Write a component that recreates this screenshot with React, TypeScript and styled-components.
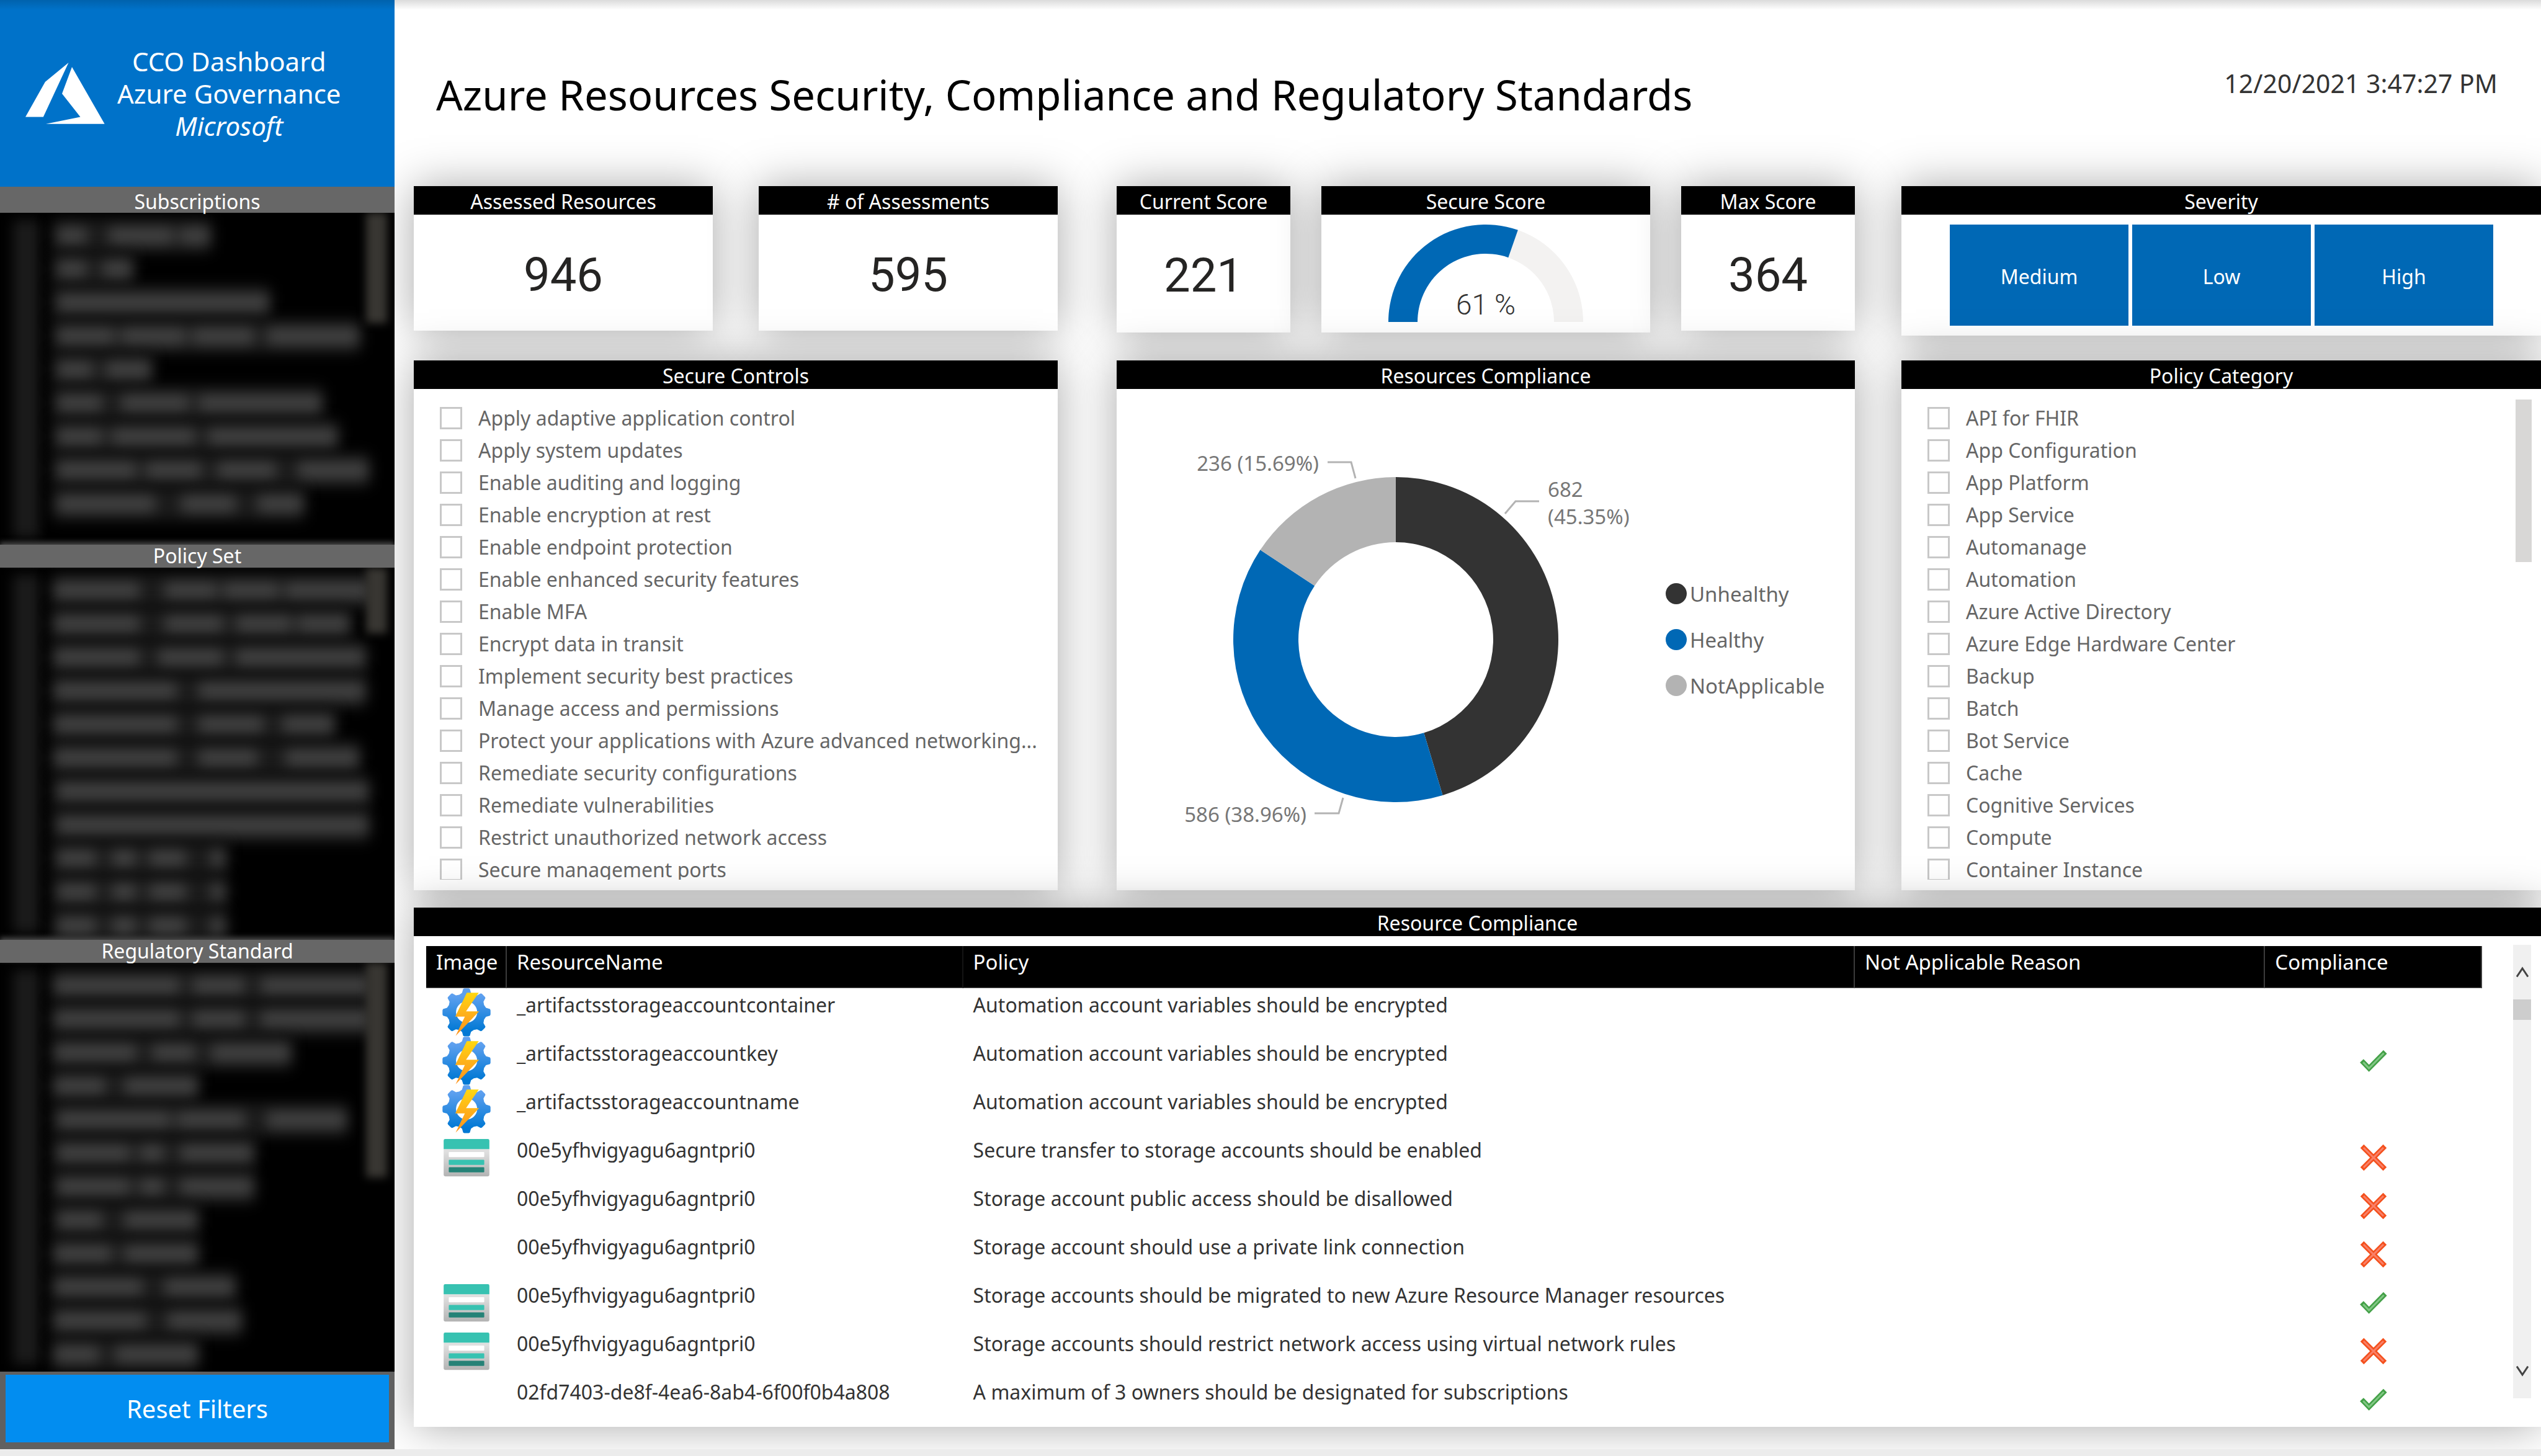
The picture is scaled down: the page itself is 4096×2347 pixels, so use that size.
import React from 'react';
import styled, { createGlobalStyle } from 'styled-components';

const UI = '"Noto Sans", "Open Sans", sans-serif';
const NUM = 'Roboto, "Noto Sans", sans-serif';
const BLUE = '#0068b5';

const Global = createGlobalStyle`
  *, *::before, *::after { box-sizing: border-box; }
  html, body { margin: 0; padding: 0; background: #fff; }
  body { font-family: ${UI}; font-size: 32px; color: #333; }
  button { font-family: inherit; border: 0; cursor: pointer; }
`;

const Page = styled.div`
  position: relative;
  display: flex;
  flex-direction: column;
  min-height: 100vh;
  overflow: hidden;
  &::before {
    content: '';
    position: absolute;
    inset: 0 0 auto 0;
    height: 16px;
    z-index: 2;
    background: linear-gradient(rgba(0, 0, 0, 0.14), rgba(0, 0, 0, 0));
  }
`;

const Columns = styled.div`
  display: flex;
  flex: 1;
`;

const BottomStrip = styled.div`
  position: relative;
  height: 11px;
  background: #ececec;
`;

/* ---------- sidebar ---------- */

const Sidebar = styled.aside`
  position: relative;
  z-index: 1;
  flex: 0 0 636px;
  min-width: 0;
  display: flex;
  flex-direction: column;
  overflow: hidden;
  background: #000;
`;

const Brand = styled.div`
  height: 301px;
  display: flex;
  align-items: center;
  gap: 20px;
  padding-left: 41px;
  background: #0072c9;
`;

const BrandText = styled.div`
  text-align: center;
  color: #fff;
  font-size: 42px;
  line-height: 52px;
`;

const SideTitle = styled.h2<{ $tall?: boolean }>`
  position: relative;
  margin: 0;
  height: ${(p) => (p.$tall ? 42 : 37)}px;
  line-height: ${(p) => (p.$tall ? 48 : 36)}px;
  background: #676767;
  box-shadow: ${(p) => (p.$tall ? 'none' : '0 -4px 8px #4a4a4a')};
  color: #fff;
  font-size: 32px;
  font-weight: 400;
  text-align: center;
`;

const HiddenList = styled.div<{ $grow: number }>`
  flex: ${(p) => p.$grow} 0 0;
  min-height: 0;
  display: flex;
  overflow: hidden;
  background: #000;
`;

const BoxStrip = styled.div`
  flex: 0 0 42px;
  margin: 12px 22px 12px 21px;
  background: #1b1b1b;
  filter: blur(10px);
`;

const HiddenRows = styled.div`
  flex: 1;
  min-width: 0;
  padding-top: 10px;
`;

const HiddenRow = styled.div`
  width: max-content;
  height: 54px;
  display: flex;
  align-items: center;
  background: #1a1a1a;
  filter: blur(11px);
`;

const Smudge = styled.span<{ $gap: number; $w: number }>`
  flex: 0 0 ${(p) => p.$w}px;
  height: 28px;
  margin-left: ${(p) => p.$gap}px;
  background: #424242;
`;

const HiddenThumb = styled.div<{ $h: number }>`
  flex: 0 0 34px;
  height: ${(p) => p.$h}px;
  margin-right: 12px;
  background: #383632;
  filter: blur(7px);
`;

const ResetArea = styled.div`
  padding: 5px 9px 11px;
  background: #606060;
`;

const ResetButton = styled.button`
  display: block;
  width: 100%;
  height: 109px;
  background: #028df0;
  color: #fff;
  font-size: 40px;
`;

/* ---------- main area ---------- */

const Main = styled.main`
  flex: 1;
  min-width: 0;
  padding-left: 31px;
  display: flex;
  flex-direction: column;
`;

const TopBar = styled.header`
  height: 300px;
  display: flex;
  align-items: center;
  justify-content: space-between;
  padding: 4px 70px 0 36px;
`;

const PageTitle = styled.h1`
  margin: 0;
  font-size: 67px;
  font-weight: 400;
  color: #000;
`;

const Stamp = styled.time`
  padding-bottom: 36px;
  font-size: 41px;
  color: #333;
`;

const Row = styled.div<{ $h: number; $mb: number }>`
  display: flex;
  height: ${(p) => p.$h}px;
  margin-bottom: ${(p) => p.$mb}px;
`;

const Group = styled.div<{ $w: number; $ml?: number; $gap?: number }>`
  flex: ${(p) => p.$w} 1 0;
  min-width: 0;
  display: flex;
  gap: ${(p) => p.$gap ?? 0}px;
  margin-left: ${(p) => p.$ml ?? 0}px;
`;

const Card = styled.section<{ $w?: number; $h: string }>`
  flex: ${(p) => p.$w ?? 1} 1 0;
  min-width: 0;
  height: ${(p) => p.$h};
  display: flex;
  flex-direction: column;
  background: #fff;
  box-shadow: 0 0 68px rgba(0, 0, 0, 0.34);
`;

const CardTitle = styled.h2`
  margin: 0;
  flex: 0 0 46px;
  height: 46px;
  line-height: 50px;
  background: #000;
  color: #fff;
  font-size: 32px;
  font-weight: 400;
  text-align: center;
`;

const Value = styled.div`
  flex: 1;
  display: flex;
  align-items: center;
  justify-content: center;
  padding-top: 6px;
  font-family: ${NUM};
  font-size: 76px;
  color: #252423;
`;

const GaugeBody = styled.div`
  flex: 1;
  padding-top: 16px;
  text-align: center;
  svg { display: inline-block; vertical-align: top; }
`;

const Tiles = styled.div`
  flex: 1;
  display: flex;
  gap: 6px;
  padding: 16px 77px 16px 78px;
`;

const Tile = styled.button`
  flex: 1;
  padding: 4px 0 0;
  background: ${BLUE};
  color: #fff;
  font-size: 32px;
`;

const ListBody = styled.div`
  flex: 1;
  min-height: 0;
  display: flex;
  padding: 21px 15px 17px 42px;
`;

const CheckList = styled.ul`
  flex: 1;
  min-width: 0;
  margin: 0;
  padding: 0;
  list-style: none;
  overflow: hidden;
`;

const CheckItem = styled.label`
  display: flex;
  align-items: center;
  height: 52px;
  gap: 26px;
  font-size: 32px;
  line-height: 52px;
  color: #666;
  white-space: nowrap;
`;

const Tick = styled.input`
  appearance: none;
  flex: none;
  width: 36px;
  height: 36px;
  margin: 0;
  border: 3px solid #c8c8c8;
  background: #fff;
`;

const ListThumb = styled.div`
  flex: none;
  width: 26px;
  height: 262px;
  margin-top: -4px;
  background: #d8d7d6;
`;

const ChartBody = styled.div`
  flex: 1;
  min-height: 0;
  display: flex;
  align-items: center;
  svg { flex: none; }
`;

const Legend = styled.ul`
  margin: 0;
  padding: 0;
  list-style: none;
`;

const LegendItem = styled.li`
  display: flex;
  align-items: center;
  gap: 5px;
  height: 74px;
  font-size: 33px;
  color: #666;
`;

const Dot = styled.span<{ $c: string }>`
  width: 34px;
  height: 34px;
  border-radius: 50%;
  background: ${(p) => p.$c};
`;

/* ---------- table ---------- */

const TableBody = styled.div`
  flex: 1;
  min-height: 0;
  display: flex;
  align-items: flex-start;
  gap: 50px;
  padding: 14px 16px 0 20px;
`;

const DataTable = styled.table`
  flex: 1;
  min-width: 0;
  margin-top: 2px;
  table-layout: fixed;
  border-collapse: separate;
  border-spacing: 0;
  font-size: 32px;
`;

const Th = styled.th<{ $w: number; $faint?: boolean }>`
  width: ${(p) => p.$w}%;
  height: 68px;
  padding: 3px 0 0 16px;
  background: #000;
  border-right: 2px solid ${(p) => (p.$faint ? '#141414' : '#3c3c3c')};
  border-bottom: 1px solid #777;
  color: #fff;
  font-size: 33px;
  font-weight: 400;
  line-height: 46px;
  text-align: left;
  vertical-align: top;
  white-space: nowrap;
`;

const Td = styled.td`
  height: 78px;
  padding: 4px 0 0 16px;
  color: #333;
  line-height: 46px;
  vertical-align: top;
  white-space: nowrap;
`;

const IconTd = styled.td`
  height: 78px;
  padding: 0;
  line-height: 0;
  text-align: center;
  vertical-align: middle;
`;

const Scroller = styled.div`
  flex: none;
  width: 29px;
  height: 731px;
  display: flex;
  flex-direction: column;
  background: #f0f0f0;
`;

const ScrollButton = styled.button`
  height: 88px;
  padding: 0;
  background: transparent;
  line-height: 0;
`;

const ScrollTrack = styled.div`
  flex: 1;
`;

const ScrollThumb = styled.div`
  height: 33px;
  background: #cdcdcd;
`;

/* ---------- data ---------- */

type Seg = [number, number];

const subscriptions: Seg[][] = [
  [[91, 140], [175, 280], [290, 340]],
  [[91, 140], [165, 215]],
  [[91, 435]],
  [[91, 185], [195, 300], [310, 410], [430, 580]],
  [[91, 150], [170, 245]],
  [[91, 165], [195, 305], [320, 520]],
  [[91, 165], [180, 315], [335, 545]],
  [[91, 220], [235, 325], [350, 445], [480, 595]],
  [[91, 250], [292, 380], [415, 490]],
];

const policySets: Seg[][] = [
  [[85, 225], [265, 350], [360, 450], [460, 600]],
  [[85, 225], [265, 360], [380, 470], [480, 565]],
  [[85, 225], [255, 360], [380, 590]],
  [[85, 285], [320, 590]],
  [[85, 285], [320, 425], [455, 540]],
  [[85, 285], [320, 415], [460, 580]],
  [[91, 595]],
  [[91, 595]],
  [[91, 155], [180, 220], [240, 300], [340, 365]],
  [[91, 155], [180, 220], [240, 300], [340, 365]],
  [[91, 155], [180, 220], [240, 300], [340, 365]],
];

const standards: Seg[][] = [
  [[85, 290], [310, 395], [420, 600]],
  [[85, 290], [310, 395], [420, 600]],
  [[85, 220], [245, 315], [340, 470]],
  [[85, 170], [200, 320]],
  [[91, 275], [285, 395], [430, 560]],
  [[91, 210], [225, 265], [290, 410]],
  [[91, 210], [225, 265], [290, 410]],
  [[91, 165], [200, 320]],
  [[85, 180], [200, 320]],
  [[85, 230], [265, 380]],
  [[85, 235], [270, 390]],
  [[85, 160], [185, 320]],
];

const controls = [
  'Apply adaptive application control',
  'Apply system updates',
  'Enable auditing and logging',
  'Enable encryption at rest',
  'Enable endpoint protection',
  'Enable enhanced security features',
  'Enable MFA',
  'Encrypt data in transit',
  'Implement security best practices',
  'Manage access and permissions',
  'Protect your applications with Azure advanced networking...',
  'Remediate security configurations',
  'Remediate vulnerabilities',
  'Restrict unauthorized network access',
  'Secure management ports',
];

const categories = [
  'API for FHIR',
  'App Configuration',
  'App Platform',
  'App Service',
  'Automanage',
  'Automation',
  'Azure Active Directory',
  'Azure Edge Hardware Center',
  'Backup',
  'Batch',
  'Bot Service',
  'Cache',
  'Cognitive Services',
  'Compute',
  'Container Instance',
];

type Kind = 'gear' | 'storage' | '';
type State = 'ok' | 'bad' | '';

const resources: [Kind, string, string, State][] = [
  ['gear', '_artifactsstorageaccountcontainer', 'Automation account variables should be encrypted', ''],
  ['gear', '_artifactsstorageaccountkey', 'Automation account variables should be encrypted', 'ok'],
  ['gear', '_artifactsstorageaccountname', 'Automation account variables should be encrypted', ''],
  ['storage', '00e5yfhvigyagu6agntpri0', 'Secure transfer to storage accounts should be enabled', 'bad'],
  ['', '00e5yfhvigyagu6agntpri0', 'Storage account public access should be disallowed', 'bad'],
  ['', '00e5yfhvigyagu6agntpri0', 'Storage account should use a private link connection', 'bad'],
  ['storage', '00e5yfhvigyagu6agntpri0', 'Storage accounts should be migrated to new Azure Resource Manager resources', 'ok'],
  ['storage', '00e5yfhvigyagu6agntpri0', 'Storage accounts should restrict network access using virtual network rules', 'bad'],
  ['', '02fd7403-de8f-4ea6-8ab4-6f00f0b4a808', 'A maximum of 3 owners should be designated for subscriptions', 'ok'],
];

/* ---------- drawings ---------- */

const AzureLogo = () => (
  <svg width="128" height="99" viewBox="41 98 128 99" fill="#fff" aria-hidden="true">
    <path d="M110.5 98 72.8 129 41 185.6H69.8Z" />
    <path d="M116 105 100 148 129.5 185.6 74 196.8H168.6Z" />
  </svg>
);

const polar = (cx: number, cy: number, r: number, deg: number) => {
  const a = ((deg - 90) * Math.PI) / 180;
  return `${(cx + r * Math.cos(a)).toFixed(2)} ${(cy + r * Math.sin(a)).toFixed(2)}`;
};

const ring = (cx: number, cy: number, R: number, r: number, from: number, to: number) => {
  const big = to - from > 180 ? 1 : 0;
  return `M${polar(cx, cy, R, from)}A${R} ${R} 0 ${big} 1 ${polar(cx, cy, R, to)}L${polar(cx, cy, r, to)}A${r} ${r} 0 ${big} 0 ${polar(cx, cy, r, from)}Z`;
};

const gearOutline = Array.from({ length: 8 }, (_, i) => {
  const c = i * 45;
  return [
    [97, -22.5], [102, -13], [121, -8], [123, -5], [123, 5], [121, 8], [102, 13],
  ].map(([r, d]) => polar(159.5, 150, r, c + d)).join('L');
}).join('L');

const GearIcon = () => (
  <svg width="78" height="78" viewBox="36 27 247 247" aria-hidden="true">
    <defs>
      <linearGradient id="gearFill" x1="0" y1="0" x2="0" y2="1">
        <stop offset="0.15" stopColor="#5ea0ef" />
        <stop offset="0.9" stopColor="#0078d4" />
      </linearGradient>
      <linearGradient id="boltFill" x1="0" y1="0" x2="0" y2="1">
        <stop offset="0" stopColor="#ffd70f" />
        <stop offset="0.5" stopColor="#feb01b" />
        <stop offset="1" stopColor="#fe921b" />
      </linearGradient>
    </defs>
    <path d={`M${gearOutline}Z`} fill="url(#gearFill)" />
    <circle cx="160" cy="149" r="54" fill="#fff" />
    <path d="M161 50H222L157 145H224L104 270L151 172H102Z" fill="url(#boltFill)" />
  </svg>
);

const StorageIcon = () => (
  <svg width="78" height="78" viewBox="0 0 18 18" aria-hidden="true">
    <defs>
      <linearGradient id="storageFill" x1="0" y1="1" x2="0" y2="0">
        <stop offset="0" stopColor="#b3b3b3" />
        <stop offset="0.9" stopColor="#dfdfdf" />
      </linearGradient>
    </defs>
    <path d="M.5 5.8h17v9.6a.57.57 0 0 1-.57.57H1.07a.57.57 0 0 1-.57-.57Z" fill="url(#storageFill)" />
    <path d="M1.07 2.1h15.86a.57.57 0 0 1 .57.57V5.8H.5V2.67a.57.57 0 0 1 .57-.57Z" fill="#37c2b1" />
    <rect x="2.4" y="6.9" width="13.2" height="1.9" rx=".28" fill="#fff" />
    <rect x="2.4" y="9.8" width="13.2" height="1.9" rx=".28" fill="#37c2b1" />
    <rect x="2.4" y="12.6" width="13.2" height="1.9" rx=".28" fill="#258277" />
  </svg>
);

const OkIcon = () => (
  <svg width="48" height="48" viewBox="-24 -24 48 48" fill="none" role="img" aria-label="Compliant">
    <path d="M-19 0 -7.3 12 18.8-14.4" stroke="#43a047" strokeWidth="8" />
    <path d="M-16.6 2.4 -7.3 12 16.6-12.2" stroke="#81c784" strokeWidth="3" />
  </svg>
);

const BadIcon = () => (
  <svg width="48" height="48" viewBox="-24 -24 48 48" fill="none" role="img" aria-label="Not compliant">
    <path d="M-18.4-18.4 18.4 18.4M18.4-18.4-18.4 18.4" stroke="#f4511e" strokeWidth="8" />
    <path d="M-16-16 16 16M16-16-16 16" stroke="#fa8068" strokeWidth="3" />
  </svg>
);

const Gauge = () => {
  const end = -90 + 180 * (221 / 364);
  return (
    <svg width="314" height="157" viewBox="0 0 314 157" role="img" aria-label="Secure score">
      <path d={ring(157, 157, 157, 110, end, 90)} fill="#f3f2f1" />
      <path d={ring(157, 157, 157, 110, -90, end)} fill={BLUE} />
      <text x="157" y="145" textAnchor="middle" fontFamily={NUM} fontWeight="300" fontSize="46" fill="#333">61 %</text>
    </svg>
  );
};

const parts = [
  { name: 'Unhealthy', count: 682, color: '#333333' },
  { name: 'Healthy', count: 586, color: BLUE },
  { name: 'NotApplicable', count: 236, color: '#b3b3b3' },
];

const Donut = () => {
  const total = parts.reduce((s, p) => s + p.count, 0);
  let at = 0;
  return (
    <svg width="885" height="808" viewBox="0 0 885 808" fontFamily={UI} fontSize="33" fill="#777">
      {parts.map((p) => {
        const from = at;
        at += (p.count / total) * 360;
        return <path key={p.name} d={ring(450, 404, 262, 157, from, at)} fill={p.color} />;
      })}
      <g fill="none" stroke="#b3b3b3" strokeWidth="3">
        <path d="M340 118H378L385 144" />
        <path d="M681 181H643L626 201" />
        <path d="M319 684H358L365 659" />
      </g>
      <text x="326" y="132" textAnchor="end">236 (15.69%)</text>
      <text x="695" y="174">682</text>
      <text x="695" y="218">(45.35%)</text>
      <text x="306" y="698" textAnchor="end">586 (38.96%)</text>
    </svg>
  );
};

/* ---------- composed parts ---------- */

const Redacted = ({ rows, grow, thumb }: { rows: Seg[][]; grow: number; thumb: number }) => (
  <HiddenList $grow={grow} aria-hidden="true">
    <BoxStrip />
    <HiddenRows>
      {rows.map((segs, i) => (
        <HiddenRow key={i}>
          {segs.map(([a, b], j) => (
            <Smudge key={j} $gap={a - (j ? segs[j - 1][1] : 85)} $w={b - a} />
          ))}
        </HiddenRow>
      ))}
    </HiddenRows>
    <HiddenThumb $h={thumb} />
  </HiddenList>
);

const Checks = ({ items, scroll }: { items: string[]; scroll?: boolean }) => (
  <ListBody>
    <CheckList>
      {items.map((t) => (
        <li key={t}>
          <CheckItem>
            <Tick type="checkbox" />
            {t}
          </CheckItem>
        </li>
      ))}
    </CheckList>
    {scroll && <ListThumb />}
  </ListBody>
);

export default function App() {
  return (
    <Page>
      <Global />
      <Columns>
        <Sidebar>
          <Brand>
            <AzureLogo />
            <BrandText>
              CCO Dashboard
              <br />
              Azure Governance
              <br />
              <em>Microsoft</em>
            </BrandText>
          </Brand>
          <SideTitle $tall>Subscriptions</SideTitle>
          <Redacted rows={subscriptions} grow={535} thumb={178} />
          <SideTitle>Policy Set</SideTitle>
          <Redacted rows={policySets} grow={600} thumb={106} />
          <SideTitle>Regulatory Standard</SideTitle>
          <Redacted rows={standards} grow={659} thumb={346} />
          <ResetArea>
            <ResetButton type="button">Reset Filters</ResetButton>
          </ResetArea>
        </Sidebar>

        <Main>
          <TopBar>
            <PageTitle>Azure Resources Security, Compliance and Regulatory Standards</PageTitle>
            <Stamp>12/20/2021 3:47:27 PM</Stamp>
          </TopBar>

          <Row $h={241} $mb={40}>
            <Group $w={1038} $gap={74}>
              <Card $h="233px">
                <CardTitle>Assessed Resources</CardTitle>
                <Value>946</Value>
              </Card>
              <Card $h="233px">
                <CardTitle># of Assessments</CardTitle>
                <Value>595</Value>
              </Card>
            </Group>
            <Group $w={1190} $ml={95} $gap={50}>
              <Card $w={280} $h="236px">
                <CardTitle>Current Score</CardTitle>
                <Value>221</Value>
              </Card>
              <Card $w={530} $h="236px">
                <CardTitle>Secure Score</CardTitle>
                <GaugeBody>
                  <Gauge />
                </GaugeBody>
              </Card>
              <Card $w={280} $h="233px">
                <CardTitle>Max Score</CardTitle>
                <Value>364</Value>
              </Card>
            </Group>
            <Group $w={1031} $ml={75}>
              <Card $h="241px">
                <CardTitle>Severity</CardTitle>
                <Tiles>
                  <Tile type="button">Medium</Tile>
                  <Tile type="button">Low</Tile>
                  <Tile type="button">High</Tile>
                </Tiles>
              </Card>
            </Group>
          </Row>

          <Row $h={854} $mb={28}>
            <Group $w={1038}>
              <Card $h="100%">
                <CardTitle>Secure Controls</CardTitle>
                <Checks items={controls} />
              </Card>
            </Group>
            <Group $w={1190} $ml={95}>
              <Card $h="100%">
                <CardTitle>Resources Compliance</CardTitle>
                <ChartBody>
                  <Donut />
                  <Legend>
                    {parts.map((p) => (
                      <LegendItem key={p.name}>
                        <Dot $c={p.color} />
                        {p.name}
                      </LegendItem>
                    ))}
                  </Legend>
                </ChartBody>
              </Card>
            </Group>
            <Group $w={1031} $ml={75}>
              <Card $h="100%">
                <CardTitle>Policy Category</CardTitle>
                <Checks items={categories} scroll />
              </Card>
            </Group>
          </Row>

          <Row $h={837} $mb={0}>
            <Card $h="100%">
              <CardTitle>Resource Compliance</CardTitle>
              <TableBody>
                <DataTable>
                  <thead>
                    <tr>
                      <Th $w={3.92}>Image</Th>
                      <Th $w={22.2} $faint>ResourceName</Th>
                      <Th $w={43.37}>Policy</Th>
                      <Th $w={19.96}>Not Applicable Reason</Th>
                      <Th $w={10.55}>Compliance</Th>
                    </tr>
                  </thead>
                  <tbody>
                    {resources.map(([kind, name, policy, state], i) => (
                      <tr key={i}>
                        <IconTd>
                          {kind === 'gear' && <GearIcon />}
                          {kind === 'storage' && <StorageIcon />}
                        </IconTd>
                        <Td>{name}</Td>
                        <Td>{policy}</Td>
                        <Td />
                        <IconTd>
                          {state === 'ok' && <OkIcon />}
                          {state === 'bad' && <BadIcon />}
                        </IconTd>
                      </tr>
                    ))}
                  </tbody>
                </DataTable>
                <Scroller>
                  <ScrollButton type="button" aria-label="Scroll up">
                    <svg width="20" height="18" viewBox="0 0 20 18" fill="none" stroke="#444" strokeWidth="3">
                      <path d="M1 16.500 10 3 19 16.500" />
                    </svg>
                  </ScrollButton>
                  <ScrollThumb />
                  <ScrollTrack />
                  <ScrollButton type="button" aria-label="Scroll down">
                    <svg width="20" height="18" viewBox="0 0 20 18" fill="none" stroke="#444" strokeWidth="3">
                      <path d="M1 1.500 10 15 19 1.500" />
                    </svg>
                  </ScrollButton>
                </Scroller>
              </TableBody>
            </Card>
          </Row>
        </Main>
      </Columns>
      <BottomStrip />
    </Page>
  );
}
